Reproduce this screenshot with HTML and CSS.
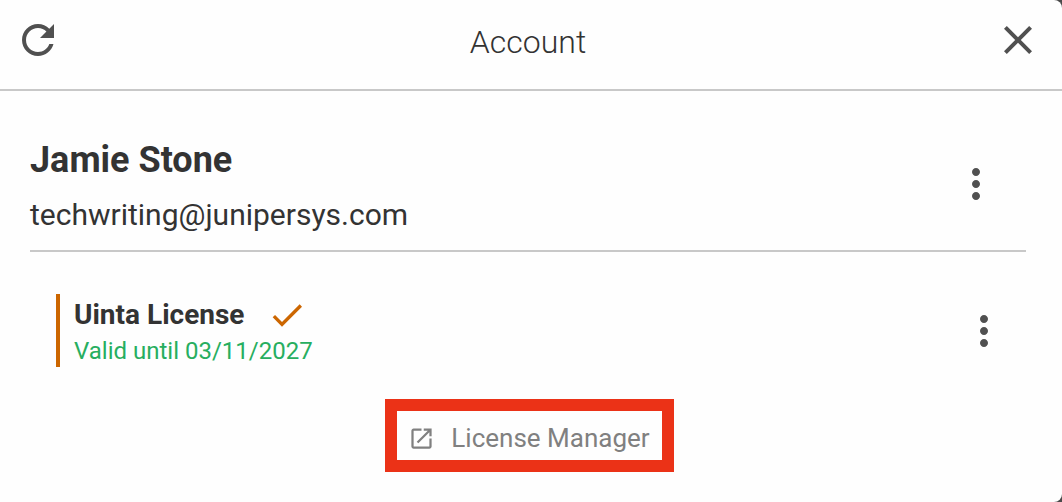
FILE: index.html
```html
<!DOCTYPE html>
<html lang="en">
<head>
  <meta charset="UTF-8">
  <meta name="viewport" content="width=device-width, initial-scale=1.0">
  <title>Account</title>
  <link rel="stylesheet" href="styles.css">
</head>
<body>
  <div class="panel">
    <header class="top-bar">
      <button class="icon-btn" type="button" aria-label="Refresh">
        <svg viewBox="0 0 24 24"><path d="M17.65 6.35C16.2 4.9 14.21 4 12 4c-4.42 0-7.99 3.58-7.99 8s3.57 8 7.99 8c3.73 0 6.84-2.55 7.73-6h-2.08c-.82 2.33-3.04 4-5.65 4-3.31 0-6-2.69-6-6s2.69-6 6-6c1.66 0 3.14.69 4.22 1.78L13 11h7V4l-2.35 2.35z"/></svg>
      </button>
      <h1 class="title">Account</h1>
      <button class="icon-btn" type="button" aria-label="Close">
        <svg viewBox="0 0 24 24"><path d="M19 6.41L17.59 5 12 10.59 6.41 5 5 6.41 10.59 12 5 17.59 6.41 19 12 13.41 17.59 19 19 17.59 13.41 12z"/></svg>
      </button>
    </header>
    <main class="content">
      <section class="user">
        <div class="user-info">
          <h2 class="user-name">Jamie Stone</h2>
          <p class="user-email">techwriting@junipersys.com</p>
        </div>
        <button class="icon-btn" type="button" aria-label="User options">
          <svg viewBox="0 0 24 24"><path d="M12 8c1.1 0 2-.9 2-2s-.9-2-2-2-2 .9-2 2 .9 2 2 2zm0 2c-1.1 0-2 .9-2 2s.9 2 2 2 2-.9 2-2-.9-2-2-2zm0 6c-1.1 0-2 .9-2 2s.9 2 2 2 2-.9 2-2-.9-2-2-2z"/></svg>
        </button>
      </section>
      <section class="license">
        <div class="license-info">
          <div class="license-head">
            <h3 class="license-name">Uinta License</h3>
            <svg class="check" viewBox="0 0 24 24" role="img" aria-label="Active"><path d="M9 16.17L4.83 12l-1.42 1.41L9 19 21 7l-1.41-1.41z"/></svg>
          </div>
          <p class="license-valid">Valid until 03/11/2027</p>
        </div>
        <button class="icon-btn" type="button" aria-label="License options">
          <svg viewBox="0 0 24 24"><path d="M12 8c1.1 0 2-.9 2-2s-.9-2-2-2-2 .9-2 2 .9 2 2 2zm0 2c-1.1 0-2 .9-2 2s.9 2 2 2 2-.9 2-2-.9-2-2-2zm0 6c-1.1 0-2 .9-2 2s.9 2 2 2 2-.9 2-2-.9-2-2-2z"/></svg>
        </button>
      </section>
      <div class="manager-row">
        <a class="manager-link" href="#">
          <svg class="open-icon" viewBox="0 0 24 24"><path d="M19 19H5V5h7V3H5c-1.11 0-2 .9-2 2v14c0 1.1.89 2 2 2h14c1.1 0 2-.9 2-2v-7h-2v7zM14 3v2h3.59l-9.83 9.83 1.41 1.41L19 6.41V10h2V3h-7z"/></svg>
          <span>License Manager</span>
        </a>
      </div>
    </main>
  </div>
</body>
</html>
```

FILE: styles.css
```css
* { margin: 0; padding: 0; box-sizing: border-box; }
body {
  font-family: Roboto, Arial, sans-serif;
  background-color: #4a4a4a;
  color: #333;
}
svg { display: block; fill: currentColor; }
.panel {
  min-height: 100vh;
  background-color: #fefefe;
  border-radius: 0 8px 8px 0;
}
.top-bar {
  display: flex;
  align-items: center;
  justify-content: space-between;
  padding: 16px 20px 25px 14px;
  border-bottom: 2px solid #c8c8c8;
}
.title {
  font-size: 32px;
  line-height: 48px;
  font-weight: 300;
  padding-top: 2px;
  margin-bottom: -2px;
}
.icon-btn {
  flex: none;
  width: 48px;
  height: 48px;
  background: none;
  border: none;
  color: #505050;
  cursor: pointer;
}
.content { padding: 45px 36px 30px 30px; }
.user {
  display: flex;
  align-items: center;
  justify-content: space-between;
  padding: 0 26px 18px 0;
  border-bottom: 2px solid #c8c8c8;
}
.user-name {
  font-size: 36px;
  line-height: 48px;
  font-weight: 700;
}
.user-email {
  font-size: 30px;
  line-height: 34px;
  margin-top: 14px;
}
.license {
  display: flex;
  align-items: center;
  justify-content: space-between;
  margin-top: 42px;
  padding: 0 18px 0 26px;
}
.license-info {
  border-left: 4px solid #cc6600;
  padding-left: 14px;
}
.license-head {
  display: flex;
  align-items: center;
  gap: 23px;
}
.license-name {
  font-size: 28px;
  line-height: 42px;
  font-weight: 700;
}
.check { width: 40px; height: 40px; color: #cc6600; }
.license-valid {
  font-size: 24px;
  line-height: 31px;
  color: #27ae60;
}
.manager-row {
  display: flex;
  justify-content: center;
  margin-top: 32px;
  padding-left: 3px;
}
.manager-link {
  display: flex;
  align-items: center;
  gap: 16px;
  padding: 10px 12px 5px 11px;
  border: 12px solid #eb3217;
  font-size: 26px;
  line-height: 34px;
  color: #808080;
  text-decoration: none;
}
.open-icon { width: 27px; height: 27px; }
```
